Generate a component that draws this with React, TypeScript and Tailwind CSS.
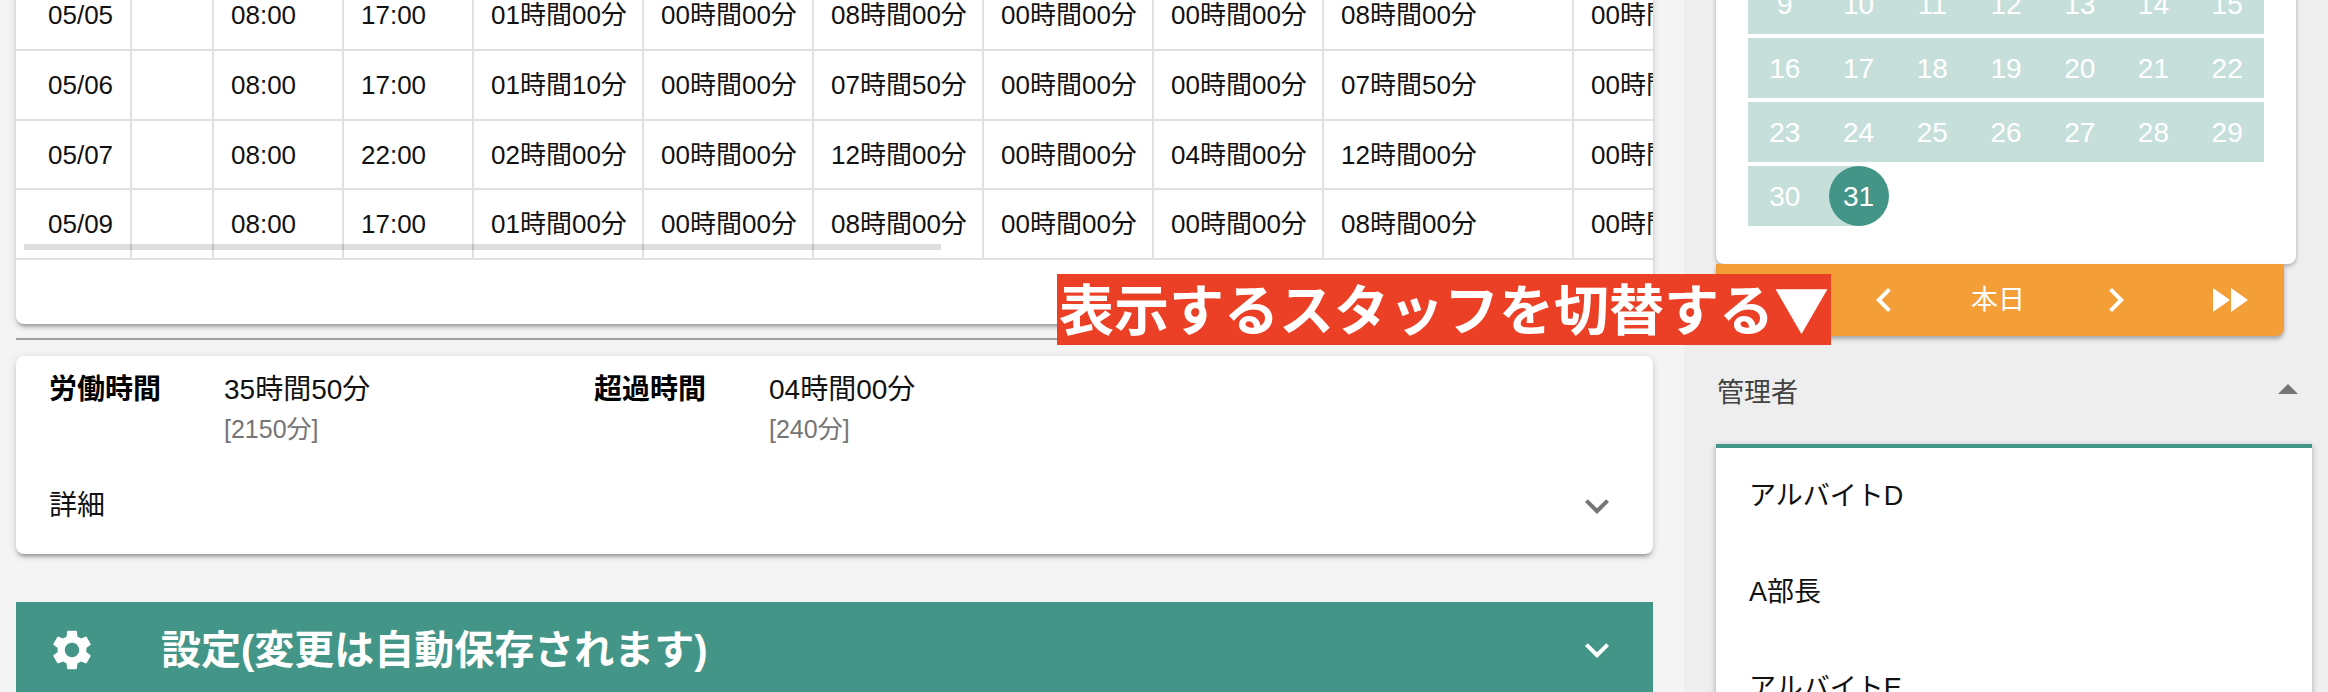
const FONT = 'font-["Liberation_Sans","Noto_Sans_CJK_JP",sans-serif]';

const rows = [
  { h: 'h-[70px]', cells: ['05/05', '', '08:00', '17:00', '01時間00分', '00時間00分', '08時間00分', '00時間00分', '00時間00分', '08時間00分', '00時間00分'] },
  { h: 'h-[70px]', cells: ['05/06', '', '08:00', '17:00', '01時間10分', '00時間00分', '07時間50分', '00時間00分', '00時間00分', '07時間50分', '00時間00分'] },
  { h: 'h-[69px]', cells: ['05/07', '', '08:00', '22:00', '02時間00分', '00時間00分', '12時間00分', '00時間00分', '04時間00分', '12時間00分', '00時間00分'] },
  { h: 'h-[70px]', cells: ['05/09', '', '08:00', '17:00', '01時間00分', '00時間00分', '08時間00分', '00時間00分', '00時間00分', '08時間00分', '00時間00分'] },
];

const colWidths = ['w-[116px]', 'w-[82px]', 'w-[130px]', 'w-[130px]', 'w-[170px]', 'w-[170px]', 'w-[170px]', 'w-[170px]', 'w-[170px]', 'w-[250px]', 'w-[200px]'];

const calendar = [
  ['9', '10', '11', '12', '13', '14', '15'],
  ['16', '17', '18', '19', '20', '21', '22'],
  ['23', '24', '25', '26', '27', '28', '29'],
];

function Icon({ d, className }: { d: string; className?: string }) {
  return (
    <svg viewBox="0 0 24 24" className={`w-12 h-12 fill-current shrink-0 ${className ?? ''}`}>
      <path d={d} />
    </svg>
  );
}

const chevronDown = 'M16.59 8.59L12 13.17 7.41 8.59 6 10l6 6 6-6z';
const chevronLeft = 'M15.41 7.41L14 6l-6 6 6 6 1.41-1.41L10.83 12z';
const chevronRight = 'M10 6L8.59 7.41 13.17 12l-4.58 4.59L10 18l6-6z';
const fastForward = 'M4 18l8.5-6L4 6v12zm9-12v12l8.5-6L13 6z';
const fastRewind = 'M11 18V6l-8.5 6 8.5 6zm.5-6l8.5 6V6l-8.5 6z';
const arrowUp = 'M7 14l5-5 5 5z';
const gear =
  'M19.14 12.94c.04-.3.06-.61.06-.94 0-.32-.02-.64-.07-.94l2.03-1.58c.18-.14.23-.41.12-.61l-1.92-3.32c-.12-.22-.37-.29-.59-.22l-2.39.96c-.5-.38-1.03-.7-1.62-.94l-.36-2.54c-.04-.24-.24-.41-.48-.41h-3.84c-.24 0-.43.17-.47.41l-.36 2.54c-.59.24-1.13.57-1.62.94l-2.39-.96c-.22-.08-.47 0-.59.22L2.74 8.87c-.12.21-.08.47.12.61l2.03 1.58c-.05.3-.09.63-.09.94s.02.64.07.94l-2.03 1.58c-.18.14-.23.41-.12.61l1.92 3.32c.12.22.37.29.59.22l2.39-.96c.5.38 1.03.7 1.62.94l.36 2.54c.05.24.24.41.48.41h3.84c.24 0 .44-.17.47-.41l.36-2.54c.59-.24 1.13-.56 1.62-.94l2.39.96c.22.08.47 0 .59-.22l1.92-3.32c.12-.22.07-.47-.12-.61l-2.01-1.58zM12 15.6c-1.98 0-3.6-1.62-3.6-3.6s1.62-3.6 3.6-3.6 3.6 1.62 3.6 3.6-1.62 3.6-3.6 3.6z';

function WorkTable() {
  return (
    <div className="relative bg-white rounded-b-lg pb-[64px] overflow-hidden shadow-[0_4px_4px_-2px_rgba(0,0,0,0.35),0_2px_8px_rgba(0,0,0,0.14)]">
      <table className="table-fixed border-separate border-spacing-0 w-[1758px] text-[26px] text-[#111]">
        <colgroup>
          {colWidths.map((w, i) => (
            <col key={i} className={w} />
          ))}
        </colgroup>
        <tbody>
          {rows.map((row) => (
            <tr key={row.cells[0]} className={row.h}>
              {row.cells.map((c, i) => (
                <td
                  key={i}
                  className={`border-r-2 border-b-2 border-[#e0e0e0] whitespace-nowrap p-0 pt-[1px] ${i === 0 ? 'pl-[32px]' : 'pl-[17px]'}`}
                >
                  {c}
                </td>
              ))}
            </tr>
          ))}
        </tbody>
      </table>
      {/* scrollbar thumb on top of the table */}
      <div className="absolute left-[8px] top-[263px] w-[917px] h-[6px] bg-black/[0.13]" />
    </div>
  );
}

function Summary({ label, value, minutes, className }: { label: string; value: string; minutes: string; className: string }) {
  return (
    <div className={`flex ${className}`}>
      <div className="w-[175px] font-bold text-[28px] leading-[36px] text-black">{label}</div>
      <div>
        <div className="text-[28px] leading-[36px] text-[#111]">{value}</div>
        <div className="mt-[1px] text-[25px] leading-[40px] text-[#757575]">{minutes}</div>
      </div>
    </div>
  );
}

function Calendar() {
  return (
    <div className="bg-white rounded-b-lg px-[32px] pb-[38px] shadow-[0_2px_4px_rgba(0,0,0,0.3)] flex flex-col gap-[4px] text-[28px] text-white">
      {calendar.map((week) => (
        <div key={week[0]} className="grid grid-cols-7 h-[60px] bg-[#c7dfda]">
          {week.map((d) => (
            <div key={d} className="flex items-center justify-center pt-[2px]">
              {d}
            </div>
          ))}
        </div>
      ))}
      <div className="grid grid-cols-7 h-[60px]">
        <div className="flex items-center justify-center bg-[#c7dfda] pt-[2px]">30</div>
        <div className="flex items-center justify-center bg-[linear-gradient(90deg,#c7dfda_50%,transparent_50%)]">
          <div className="w-[60px] h-[60px] rounded-full bg-[#439588] flex items-center justify-center pt-[2px]">31</div>
        </div>
      </div>
    </div>
  );
}

export default function App() {
  return (
    <div className={`relative w-[2328px] h-[692px] overflow-hidden flex bg-[#eeeeee] ${FONT}`}>
      <main className="w-[1684px] h-full bg-[#f4f4f4] pl-[16px] pr-[31px] shrink-0 -mt-[19px] min-h-[740px]">
        <WorkTable />
        <div className="mt-[14px] h-[2px] bg-[#9e9e9e]" />

        <section className="mt-[16px] bg-white rounded-lg shadow-[0_4px_4px_-2px_rgba(0,0,0,0.35),0_2px_8px_rgba(0,0,0,0.14)]">
          <div className="flex h-[102px] pl-[33px] pt-[16px]">
            <Summary className="w-[545px]" label="労働時間" value="35時間50分" minutes="[2150分]" />
            <Summary className="" label="超過時間" value="04時間00分" minutes="[240分]" />
          </div>
          <div className="flex items-center justify-between h-[96px] pl-[33px] pr-[32px]">
            <span className="text-[28px] text-[#111]">詳細</span>
            <Icon d={chevronDown} className="text-[#757575]" />
          </div>
        </section>

        <section className="mt-[48px] h-[96px] bg-[#439588] text-white flex items-center pl-[32px] pr-[32px]">
          <Icon d={gear} />
          <h2 className="ml-[65px] text-[40px] font-bold flex-1">設定(変更は自動保存されます)</h2>
          <Icon d={chevronDown} />
        </section>
      </main>

      <aside className="flex-1 pl-[32px] pr-[16px] -mt-[26px] min-h-[760px]">
        <div className="w-[580px]">
          <Calendar />
          <div className="w-[568px] h-[72px] bg-[#f49e37] rounded-b-lg text-white grid grid-cols-5 place-items-center shadow-[0_3px_4px_rgba(0,0,0,0.3)]">
            <Icon d={fastRewind} />
            <Icon d={chevronLeft} className="-ml-[4px]" />
            <span className="text-[27px] -ml-[4px]">本日</span>
            <Icon d={chevronRight} className="ml-[4px]" />
            <Icon d={fastForward} className="ml-[4px]" />
          </div>
        </div>

        <div className="flex items-center justify-between h-[108px] pl-[1px]">
          <span className="text-[27px] text-[#424242] pt-[6px]">管理者</span>
          <Icon d={arrowUp} className="text-[#757575]" />
        </div>

        <div className="bg-white border-t-4 border-[#439588] shadow-[0_2px_6px_rgba(0,0,0,0.3)] text-[27px] text-[#111]">
          {['アルバイトD', 'A部長', 'アルバイトE'].map((name) => (
            <div key={name} className="h-[96px] flex items-center pl-[33px]">
              {name}
            </div>
          ))}
        </div>
      </aside>

      {/* red annotation pasted over the screenshot */}
      <div className='absolute left-[1057px] top-[274px] w-[774px] h-[71px] bg-[#ec4026] text-white font-bold font-["Noto_Sans_CJK_JP",sans-serif] text-[55px] leading-[64px] whitespace-nowrap overflow-hidden pl-[2px]'>
        表示するスタッフを切替する▼
      </div>
    </div>
  );
}
